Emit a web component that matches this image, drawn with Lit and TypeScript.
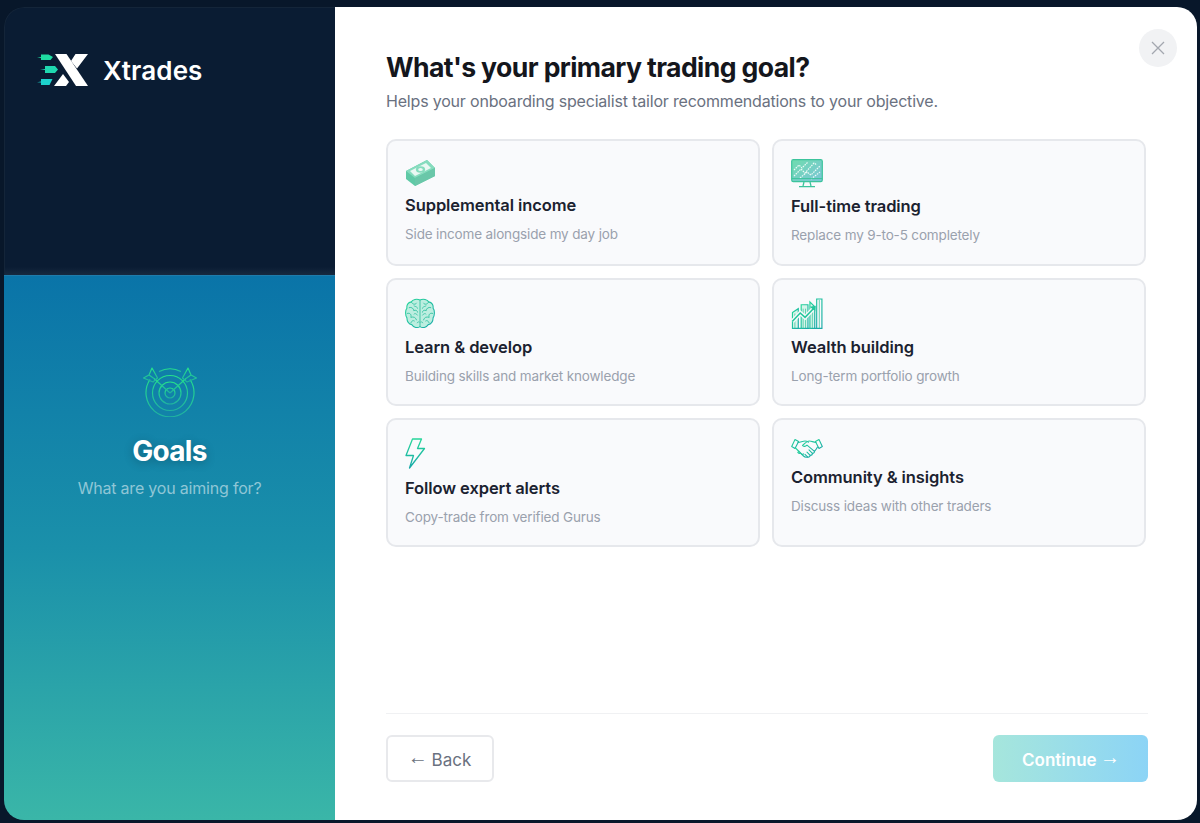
import { html, svg, css, LitElement } from 'lit';
import { customElement } from 'lit/decorators.js';

const grad = (id: string) => svg`
  <defs>
    <linearGradient id=${id} x1="0" y1="0" x2="1" y2="1">
      <stop offset="0" stop-color="#27d69a"/>
      <stop offset="1" stop-color="#1aa9a8"/>
    </linearGradient>
  </defs>`;

// icons for the goal cards
const moneyIcon = html`<svg class="ic" width="31" height="28" viewBox="0 0 31 28">
  <path d="M1 12 L22 1 L30 9 L30 17 L10 27 L1 20 Z" fill="#5fc9a6"/>
  <path d="M1 12 L22 1 L30 9 L10 19 Z" fill="#86dcbe"/>
  <path d="M10 19 L30 9 L30 17 L10 27 Z" fill="#6ac7a9"/>
  <path d="M5 12 L21 4 L26 9 L10 17 Z" fill="#eaf8f3"/>
  <ellipse cx="15.5" cy="10.5" rx="4.6" ry="3.2" fill="#86dcbe"/>
  <ellipse cx="15.5" cy="10.5" rx="2.3" ry="1.6" fill="#eaf8f3"/>
</svg>`;

const monitorIcon = html`<svg class="ic" width="32" height="29" viewBox="0 0 32 29">
  <defs>
    <linearGradient id="monf" x1="0" y1="0" x2="1" y2="1">
      <stop offset="0" stop-color="#6fdcae"/>
      <stop offset="1" stop-color="#7cc4d8"/>
    </linearGradient>
  </defs>
  <rect x="0.7" y="0.7" width="30.6" height="22" rx="1.6" fill="url(#monf)" stroke="#3cc49c" stroke-width="1.2"/>
  <path d="M3 11 L8 6 L11 9 L17 3 M3 17 L10 10 L14 14 L23 4 L26 6 M9 19 L16 13 L20 16 L29 7 M20 20 L29 13"
    fill="none" stroke="#eafaf5" stroke-width="1.2" stroke-dasharray="1.6 .9"/>
  <path d="M0.7 19.6 H31.3" stroke="#3cc49c" stroke-width="1"/>
  <path d="M13 23 L12 27 M19 23 L20 27 M8 27.6 H24" stroke="#3cc49c" stroke-width="1.3" fill="none"/>
</svg>`;

const brainIcon = html`<svg class="ic" width="30" height="31" viewBox="0 0 31 32">
  ${grad('br')}
  <path d="M15.5 2 C12 .5 8 1.5 6.5 4 C3 4.5 1.5 7.5 2 10.5 C0 13 .3 18 2 20.5 C1.8 24 4 27 7 27.5 C9 30.5 13 31.5 15.5 29.5 C18 31.5 22 30.5 24 27.5 C27 27 29.2 24 29 20.5 C30.7 18 31 13 29 10.5 C29.5 7.5 28 4.5 24.5 4 C23 1.5 19 .5 15.5 2 Z"
    fill="#bdeee0" stroke="url(#br)" stroke-width="1.1"/>
  <path d="M15.5 2 V29.5 M6.5 4 C8 7 11 7 12 5 M4 10 C7 9 9 11 9 13 C11 12 13 13 13 15 M2 16 C5 15 7 17 6 20 C9 19 11 20 12 23 M6 26 C7 23 9 23 10 24 M24.5 4 C23 7 20 7 19 5 M27 10 C24 9 22 11 22 13 C20 12 18 13 18 15 M29 16 C26 15 24 17 25 20 C22 19 20 20 19 23 M25 26 C24 23 22 23 21 24"
    fill="none" stroke="#2ebf9f" stroke-width=".9"/>
  <path d="M9 8 C11 9 13 9 13 11 M22 8 C20 9 18 9 18 11 M9 17 C10 15.5 12 16 13 18 M22 17 C21 15.5 19 16 18 18 M12.5 26 C13 24.5 14 24.5 15 25 M18.5 26 C18 24.5 17 24.5 16 25"
    fill="none" stroke="#2ebf9f" stroke-width=".8"/>
</svg>`;

const chartIcon = html`<svg class="ic" width="32" height="31" viewBox="0 0 32 32">
  ${grad('ch')}
  <g fill="none" stroke="url(#ch)" stroke-width="1.2">
    <path d="M1 31.4 H31.4 V1 H26 V31.4"/>
    <path d="M1 15 L7 11 V31.4 H1 Z" fill="#d6f5ea"/>
    <path d="M10 7 H17 V31.4 H10 Z" fill="#d6f5ea"/>
    <path d="M19 4 L24 9 V31.4 H19 Z" fill="#d6f5ea"/>
  </g>
  <path d="M12 11 V31 M14.5 11 V31 M3.5 16 V31 M21.5 9 V31 M28.7 2 V31" stroke="#3cc49c" stroke-width=".8"/>
  <path d="M1 24 L9 15.5 L14 20 L23 10.5" fill="none" stroke="#f8f9fb" stroke-width="4.4"/>
  <path d="M1 24 L9 15.5 L14 20 L23 10.5" fill="none" stroke="#22c79b" stroke-width="1.6"/>
  <path d="M19 9 L25 8 L24.5 14 Z" fill="#22c79b"/>
</svg>`;

const boltIcon = html`<svg class="ic" width="21" height="32" viewBox="0 0 21 32">
  <defs>
    <linearGradient id="bo" x1="0" y1="0" x2="0" y2="1">
      <stop offset="0" stop-color="#27d69a"/>
      <stop offset="1" stop-color="#17a9a8"/>
    </linearGradient>
  </defs>
  <path d="M7.5 1 H16.5 L12.5 10.5 H19.5 L4.5 30 L8.5 17.5 H1 Z" fill="none" stroke="url(#bo)" stroke-width="1.3" stroke-linejoin="round"/>
</svg>`;

const shakeIcon = html`<svg class="ic" width="32" height="21" viewBox="0 0 32 20">
  ${grad('sh')}
  <g fill="none" stroke="url(#sh)" stroke-width="1.1" stroke-linejoin="round" stroke-linecap="round">
    <path d="M4 1 L.7 8 L4 10 L7.6 3 Z"/>
    <path d="M28 1 L31.3 8 L28 10 L24.4 3 Z"/>
    <path d="M7 4 C10 3.5 12 2.5 14 2.5 C15.5 2.5 16.5 3 17.5 3.6"/>
    <path d="M25 4 C22 3.6 20.5 2.5 18.5 2.5 C16 2.5 13.5 5 11.5 7 C12.5 8.5 14.5 8 16 6.6 L23.5 12.8 C24.4 11.8 25.3 11 26.5 8.6"/>
    <path d="M4.5 9.5 L12.5 17.5 C13.6 18.6 15 19.2 16.5 18.4 C18 19 19 18 19.2 16.8 C20.8 17 21.6 15.8 21.4 14.8 C22.8 14.8 23.8 13.6 23.4 12.6"/>
    <path d="M8 12.8 L6.8 14 C7.6 15 8.6 15.2 9.4 14.4 M10 15 C10.8 16 11.8 16.2 12.6 15.4 M16.5 18.4 L14 15.8 M19.2 16.8 L16 13.6 M21.4 14.8 L18 11.4"/>
  </g>
</svg>`;

const targetIcon = html`<svg width="54" height="52" viewBox="0 0 54 52">
  <defs>
    <linearGradient id="tg" x1="0" y1="0" x2="0" y2="1">
      <stop offset="0" stop-color="#25e08c"/>
      <stop offset="1" stop-color="#1fb3a0"/>
    </linearGradient>
  </defs>
  <g fill="none" stroke="url(#tg)" stroke-width="1.2" stroke-linejoin="round">
    <path d="M16 6.6 A24 24 0 0 1 38 6.6"/>
    <path d="M7 14.5 A24 24 0 1 0 47 14.5"/>
    <circle cx="27" cy="28" r="17.5"/>
    <circle cx="27" cy="28" r="11"/>
    <circle cx="27" cy="28" r="5"/>
    <path d="M27 28 L11 13.5 M27 28 L43 13.5"/>
    <path d="M9 3 L14.5 13 L10 17 L0.5 13 L6 10 Z M6 10 L11 13.5"/>
    <path d="M45 3 L39.5 13 L44 17 L53.5 13 L48 10 Z M48 10 L43 13.5"/>
  </g>
</svg>`;

const logo = html`<svg width="52" height="34" viewBox="0 0 52 34">
  <path d="M18 1 H29.5 L51 33 H39 Z" fill="#fff"/>
  <path d="M38.5 1 H51 L40 15.5 L34 8 Z M26 21 L32 29 L29 33 H17 Z" fill="#fff"/>
  <path d="M4 1.5 H11.5 L16 4 L13.5 7 H4 V5 L0 4.6 L4 4 Z" fill="#1fdca2"/>
  <path d="M8 13 H18 L21 16.5 L18 20 H8 V17 L3 16.5 L8 16 Z" fill="#1fd8b0"/>
  <path d="M4 26 H15.5 L12.5 32 H4 V29.6 L0 29.2 L4 28.6 Z" fill="#1dd2cc"/>
</svg>`;

const goals = [
  { icon: moneyIcon, title: 'Supplemental income', desc: 'Side income alongside my day job' },
  { icon: monitorIcon, title: 'Full-time trading', desc: 'Replace my 9-to-5 completely' },
  { icon: brainIcon, title: 'Learn & develop', desc: 'Building skills and market knowledge' },
  { icon: chartIcon, title: 'Wealth building', desc: 'Long-term portfolio growth' },
  { icon: boltIcon, title: 'Follow expert alerts', desc: 'Copy-trade from verified Gurus' },
  { icon: shakeIcon, title: 'Community & insights', desc: 'Discuss ideas with other traders' },
];

@customElement('app-root')
export class AppRoot extends LitElement {
  static styles = css`
    :host {
      display: block;
      height: 823px;
      box-sizing: border-box;
      padding: 7px 3px 3px 4px;
      background: #08172a;
      font-family: Inter, 'Liberation Sans', sans-serif;
      overflow: hidden;
    }
    .modal {
      position: relative;
      display: flex;
      height: 100%;
      border-radius: 20px;
      overflow: hidden;
    }
    .side {
      width: 331px;
      flex: none;
      display: flex;
      flex-direction: column;
    }
    .brand {
      height: 268px;
      box-sizing: border-box;
      padding: 45px 0 0 32px;
      display: flex;
      align-items: flex-start;
      gap: 14px;
      border-top: 1px solid #142539;
      border-left: 1px solid #142539;
      border-top-left-radius: 20px;
      background: linear-gradient(180deg, #0a1c33 0%, #0a1c33 97%, #16293f 100%);
    }
    .brand span {
      color: #fff;
      font-size: 26px;
      font-weight: 600;
      letter-spacing: 0.1px;
      line-height: 36px;
    }
    .hero {
      flex: 1;
      display: flex;
      flex-direction: column;
      align-items: center;
      padding-top: 89px;
      border-top: 1px solid #1f7cab;
      background: linear-gradient(180deg, #0a74a8 0%, #1a90aa 50%, #3ab6a8 100%);
    }
    .hero h2 {
      margin: 16px 0 0;
      color: #fff;
      font-size: 28px;
      line-height: 36px;
      font-weight: 700;
      letter-spacing: -0.7px;
      text-shadow: 0 2px 10px rgba(0, 0, 0, 0.25);
    }
    .hero p {
      margin: 8px 0 0;
      color: #8fc6d6;
      font-size: 16px;
      line-height: 22px;
      letter-spacing: -0.2px;
    }
    .main {
      flex: 1;
      display: flex;
      flex-direction: column;
      padding: 42px 49px 38px 51px;
      background: #fff;
    }
    h1 {
      margin: 0;
      color: #14161c;
      font-size: 26.6px;
      line-height: 36px;
      font-weight: 700;
      letter-spacing: -0.6px;
    }
    .sub {
      margin: 5px 0 0;
      color: #6a7180;
      font-size: 16px;
      line-height: 22px;
      letter-spacing: -0.19px;
    }
    .grid {
      flex: none;
      display: grid;
      grid-template-columns: 374px 374px;
      grid-template-rows: 127px 128px 129px;
      gap: 12px;
      margin-top: 27px;
    }
    .card {
      box-sizing: border-box;
      padding: 18px 17px 0;
      background: #f9fafc;
      border: 2px solid #e6e8ec;
      border-radius: 10px;
    }
    .ic {
      display: block;
    }
    .card h3 {
      margin: 6px 0 0;
      color: #1b2230;
      font-size: 16.5px;
      line-height: 24px;
      font-weight: 600;
      letter-spacing: -0.08px;
    }
    .card p {
      margin: 7px 0 0;
      color: #9aa1ad;
      font-size: 13.5px;
      line-height: 20px;
      letter-spacing: -0.15px;
    }
    .foot {
      margin-top: auto;
      border-top: 1px solid #f0f1f3;
      padding-top: 21px;
      display: flex;
      justify-content: space-between;
    }
    button {
      height: 47px;
      border-radius: 6px;
      font: inherit;
      font-size: 17px;
    }
    .arrow {
      font-family: 'Liberation Sans', sans-serif;
      font-size: 20px;
      line-height: 1;
      font-weight: 400;
      vertical-align: 2px;
      margin: 0 -1px;
    }
    .back {
      width: 108px;
      padding: 0;
      background: #fff;
      border: 2px solid #e8e9ec;
      color: #6a7180;
    }
    .next {
      width: 155px;
      padding: 0;
      border: 0;
      color: #fff;
      font-weight: 600;
      background: linear-gradient(90deg, #a6e6dc, #8cd4f6);
    }
    .close {
      position: absolute;
      top: 22px;
      right: 20px;
      width: 38px;
      height: 38px;
      border-radius: 50%;
      background: #f1f2f4;
      border: 0;
      padding: 0;
      display: flex;
      align-items: center;
      justify-content: center;
    }
  `;

  render() {
    return html`
      <div class="modal">
        <aside class="side">
          <div class="brand">${logo}<span>Xtrades</span></div>
          <div class="hero">
            ${targetIcon}
            <h2>Goals</h2>
            <p>What are you aiming for?</p>
          </div>
        </aside>
        <section class="main">
          <h1>What's your primary trading goal?</h1>
          <p class="sub">Helps your onboarding specialist tailor recommendations to your objective.</p>
          <div class="grid">
            ${goals.map(
              (g) => html`
                <div class="card">
                  ${g.icon}
                  <h3>${g.title}</h3>
                  <p>${g.desc}</p>
                </div>
              `
            )}
          </div>
          <div class="foot">
            <button class="back"><span class="arrow">←</span> Back</button>
            <button class="next">Continue <span class="arrow">→</span></button>
          </div>
        </section>
        <button class="close" aria-label="Close">
          <svg width="14" height="14" viewBox="0 0 14 14">
            <path d="M1 1 L13 13 M13 1 L1 13" stroke="#a3a7af" stroke-width="1.3"/>
          </svg>
        </button>
      </div>
    `;
  }
}
